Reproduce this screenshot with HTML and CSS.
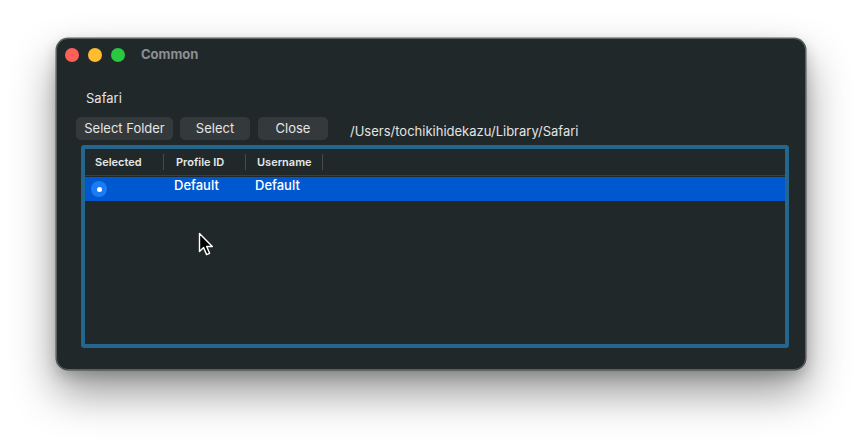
FILE: index.html
```html
<!DOCTYPE html>
<html>
<head>
<meta charset="utf-8">
<link rel="stylesheet" href="styles.css">
</head>
<body>
<div class="stage">
  <div class="window">
    <div class="titlebar">
      <div class="lights">
        <span class="light red"></span>
        <span class="light yellow"></span>
        <span class="light green"></span>
      </div>
      <span class="title">Common</span>
    </div>
    <div class="content">
      <div class="label">Safari</div>
      <div class="toolbar">
        <button class="btn btn-folder">Select Folder</button>
        <button class="btn btn-select">Select</button>
        <button class="btn btn-close">Close</button>
        <span class="path">/Users/tochikihidekazu/Library/Safari</span>
      </div>
      <div class="table-ring">
        <div class="table">
          <div class="thead">
            <div class="th col-sel">Selected</div>
            <div class="th col-id">Profile ID</div>
            <div class="th col-user">Username</div>
          </div>
          <div class="tr selected">
            <div class="td col-sel"><span class="radio"><span class="dot"></span></span></div>
            <div class="td col-id">Default</div>
            <div class="td col-user">Default</div>
          </div>
        </div>
      </div>
    </div>
  </div>
  <svg class="cursor" width="17" height="26" viewBox="0 0 17 26">
    <path d="M1.5 1.5 L1.5 19.5 L5.6 15.6 L8.6 22.6 L11.6 21.3 L8.7 14.5 L14.3 14.5 Z" fill="#000" stroke="#fff" stroke-width="1.4" stroke-linejoin="round"/>
  </svg>
</div>
</body>
</html>
```

FILE: styles.css
```css
* { box-sizing: border-box; }
html, body {
  margin: 0;
  padding: 0;
  background: #ffffff;
}
body {
  width: 862px;
  height: 444px;
  overflow: hidden;
  font-family: Inter, "Noto Sans", "Liberation Sans", sans-serif;
}
.stage {
  position: relative;
  padding: 38px 0 0 56px;
}
.window {
  width: 750px;
  height: 332px;
  background: #212829;
  border: 1px solid #5d6162;
  border-radius: 12px;
  box-shadow: 0 0 0 0.5px rgba(0,0,0,0.6), 0 22px 44px rgba(0,0,0,0.42), 0 6px 14px rgba(0,0,0,0.18);
  display: flex;
  flex-direction: column;
}
.titlebar {
  height: 31px;
  display: flex;
  align-items: center;
  padding-left: 8px;
}
.lights {
  display: flex;
  gap: 9px;
}
.light {
  width: 14px;
  height: 14px;
  border-radius: 50%;
  display: block;
}
.red { background: #fe5f57; }
.yellow { background: #febc2e; }
.green { background: #28c840; }
.title {
  margin-left: 16px;
  margin-top: -1px;
  font-size: 13px;
  font-weight: 700;
  color: #8b9092;
}
.content {
  padding: 20px 0 0 19px;
  display: flex;
  flex-direction: column;
}
.label {
  margin-left: 10px;
  height: 16px;
  line-height: 16px;
  font-size: 13px;
  color: #e2e4e4;
}
.toolbar {
  margin-top: 11px;
  display: flex;
  align-items: flex-start;
}
.btn {
  height: 23px;
  padding: 0;
  border: none;
  border-radius: 5px;
  background: #34393b;
  color: #e4e6e6;
  font-family: inherit;
  font-size: 13px;
  line-height: 23px;
  text-align: center;
}
.btn-folder { width: 97px; }
.btn-select { width: 70px; margin-left: 7px; }
.btn-close { width: 70px; margin-left: 8px; }
.path {
  margin-left: 22px;
  margin-top: 6px;
  font-size: 13px;
  line-height: 16px;
  color: #e2e4e4;
}
.table-ring {
  margin-top: 5px;
  margin-left: 5px;
  width: 708px;
  height: 203px;
  border: 4px solid #25668f;
  border-radius: 3px;
}
.table {
  height: 100%;
  background: #212829;
}
.thead {
  height: 27px;
  display: flex;
  align-items: center;
  border-bottom: 1px solid #393f41;
}
.th {
  font-size: 11px;
  font-weight: 600;
  color: #e6e8e8;
  height: 16px;
  line-height: 16px;
  border-right: 1px solid #454b4d;
}
.col-sel { width: 79px; padding-left: 10px; }
.col-id { width: 82px; padding-left: 12px; }
.col-user { width: 77px; padding-left: 11px; }
.tr {
  margin-top: 1px;
  height: 24px;
  display: flex;
}
.selected { background: #0058d0; }
.td {
  font-size: 13px;
  font-weight: 500;
  color: #ffffff;
  line-height: 16px;
}
.td.col-id { padding-left: 10px; }
.td.col-user { padding-left: 9px; }
.td.col-sel {
  padding-left: 6px;
  display: flex;
  align-items: center;
  height: 24px;
}
.radio {
  width: 16px;
  height: 16px;
  border-radius: 50%;
  background: #1c7cf4;
  display: flex;
  align-items: center;
  justify-content: center;
}
.dot {
  width: 5px;
  height: 5px;
  border-radius: 50%;
  background: #ffffff;
}
.cursor {
  position: absolute;
  left: 198px;
  top: 232px;
}
```
